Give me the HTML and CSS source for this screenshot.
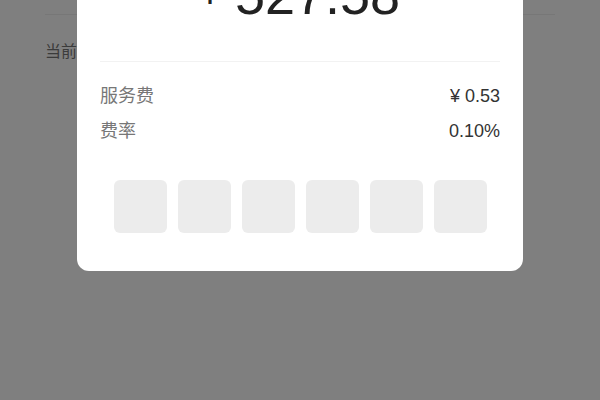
FILE: index.html
```html
<!DOCTYPE html>
<html lang="zh-CN">
<head>
    <meta charset="UTF-8">
    <title>支付</title>
    <link rel="stylesheet" href="styles.css">
</head>
<body>
<div class="page">
    <div class="page-head"></div>
    <div class="page-row"><span>当前余额</span></div>
</div>
<div class="mask">
    <div class="dialog">
        <div class="dialog-title">请输入支付密码</div>
        <div class="amount"><span class="yen">¥</span> 527.58</div>
        <ul class="info">
            <li><span class="label">服务费</span><span class="value">¥ 0.53</span></li>
            <li><span class="label">费率</span><span class="value">0.10%</span></li>
        </ul>
        <div class="pwd">
            <span></span>
            <span></span>
            <span></span>
            <span></span>
            <span></span>
            <span></span>
        </div>
    </div>
</div>
</body>
</html>
```

FILE: styles.css
```css
*{
    margin: 0;
    padding: 0;
}
body{
    width: 600px;
    height: 400px;
    overflow: hidden;
    background: #fff;
    font-family: "Liberation Sans", "Noto Sans CJK SC", sans-serif;
}
.page{
    padding: 0 45px;
}
.page-head{
    height: 14px;
    border-bottom: 1px solid #eee;
}
.page-row{
    padding-top: 26px;
    font-size: 16px;
    line-height: 22px;
    color: #777;
}

.mask{
    position: fixed;
    left: 0;
    top: 0;
    width: 600px;
    height: 400px;
    background: rgba(0,0,0,.5);
}
.dialog{
    position: absolute;
    left: 77px;
    bottom: 129px;
    width: 446px;
    box-sizing: border-box;
    padding: 0 23px 38px;
    background: #fff;
    border-radius: 12px;
}
.dialog-title{
    height: 50px;
    line-height: 50px;
    text-align: center;
    font-size: 18px;
    color: #333;
}
.amount{
    height: 60px;
    line-height: 50px;
    padding-bottom: 34px;
    border-bottom: 1px solid #f2f2f2;
    text-align: center;
    font-size: 54px;
    color: #222;
}
.amount .yen{
    font-size: 36px;
    vertical-align: 10px;
}
.info{
    list-style: none;
    padding: 17px 0 31px;
}
.info li{
    display: flex;
    justify-content: space-between;
    height: 35px;
    line-height: 35px;
    font-size: 18px;
}
.info .label{
    color: #777;
}
.info .value{
    color: #333;
}
.pwd{
    display: flex;
    justify-content: center;
    gap: 11px;
}
.pwd span{
    width: 53px;
    height: 53px;
    border-radius: 6px;
    background: #ececec;
}
```
